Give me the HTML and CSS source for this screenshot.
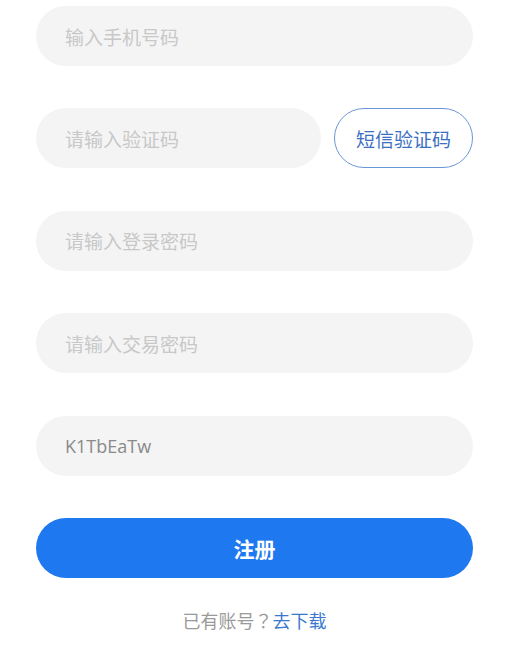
FILE: index.html
```html
<!DOCTYPE html>
<html lang="zh-CN">
<head>
<meta charset="utf-8">
<link rel="stylesheet" href="styles.css">
</head>
<body>
<div class="form">
  <div class="row"><div class="field"><span class="ph">输入手机号码</span></div></div>
  <div class="row">
    <div class="field grow"><span class="ph">请输入验证码</span></div>
    <div class="code-btn">短信验证码</div>
  </div>
  <div class="row"><div class="field"><span class="ph">请输入登录密码</span></div></div>
  <div class="row"><div class="field"><span class="ph">请输入交易密码</span></div></div>
  <div class="row"><div class="field"><span class="val">K1TbEaTw</span></div></div>
  <div class="row"><div class="submit">注册</div></div>
  <div class="foot">已有账号<span class="q" lang="zh-TW">？</span><span class="link">去下载</span></div>
</div>
</body>
</html>
```
FILE: styles.css
```css
html, body {
  margin: 0;
  padding: 0;
  background: #ffffff;
}
body {
  font-family: "Noto Sans CJK SC", "Open Sans", sans-serif;
}
.form {
  padding: 6px 33px 0 36px;
}
.row {
  display: flex;
  gap: 13px;
  margin-bottom: 42.4px;
}
.field {
  flex: 1;
  height: 60px;
  border-radius: 30px;
  background: #f4f4f4;
  display: flex;
  align-items: center;
  padding-left: 29px;
  font-size: 19px;
}
.ph {
  color: #c8c8c8;
}
.val {
  color: #8a8a8a;
  font-family: "Open Sans", "Noto Sans CJK SC", sans-serif;
  font-size: 18px;
}
.code-btn {
  width: 137px;
  height: 58px;
  border: 1.5px solid #6b96d6;
  border-radius: 31px;
  display: flex;
  align-items: center;
  justify-content: center;
  color: #3c6fc2;
  font-size: 19px;
  flex: none;
}
.submit {
  flex: 1;
  height: 60px;
  border-radius: 30px;
  background: #1e78f0;
  color: #ffffff;
  font-weight: bold;
  font-size: 21px;
  display: flex;
  align-items: center;
  justify-content: center;
}
.foot {
  margin-top: -13px;
  text-align: center;
  font-size: 18px;
  color: #9a9a9a;
}
.q {
  font-family: "Noto Sans CJK TC", "Noto Sans CJK SC", sans-serif;
}
.link {
  color: #3a78d0;
}
```
